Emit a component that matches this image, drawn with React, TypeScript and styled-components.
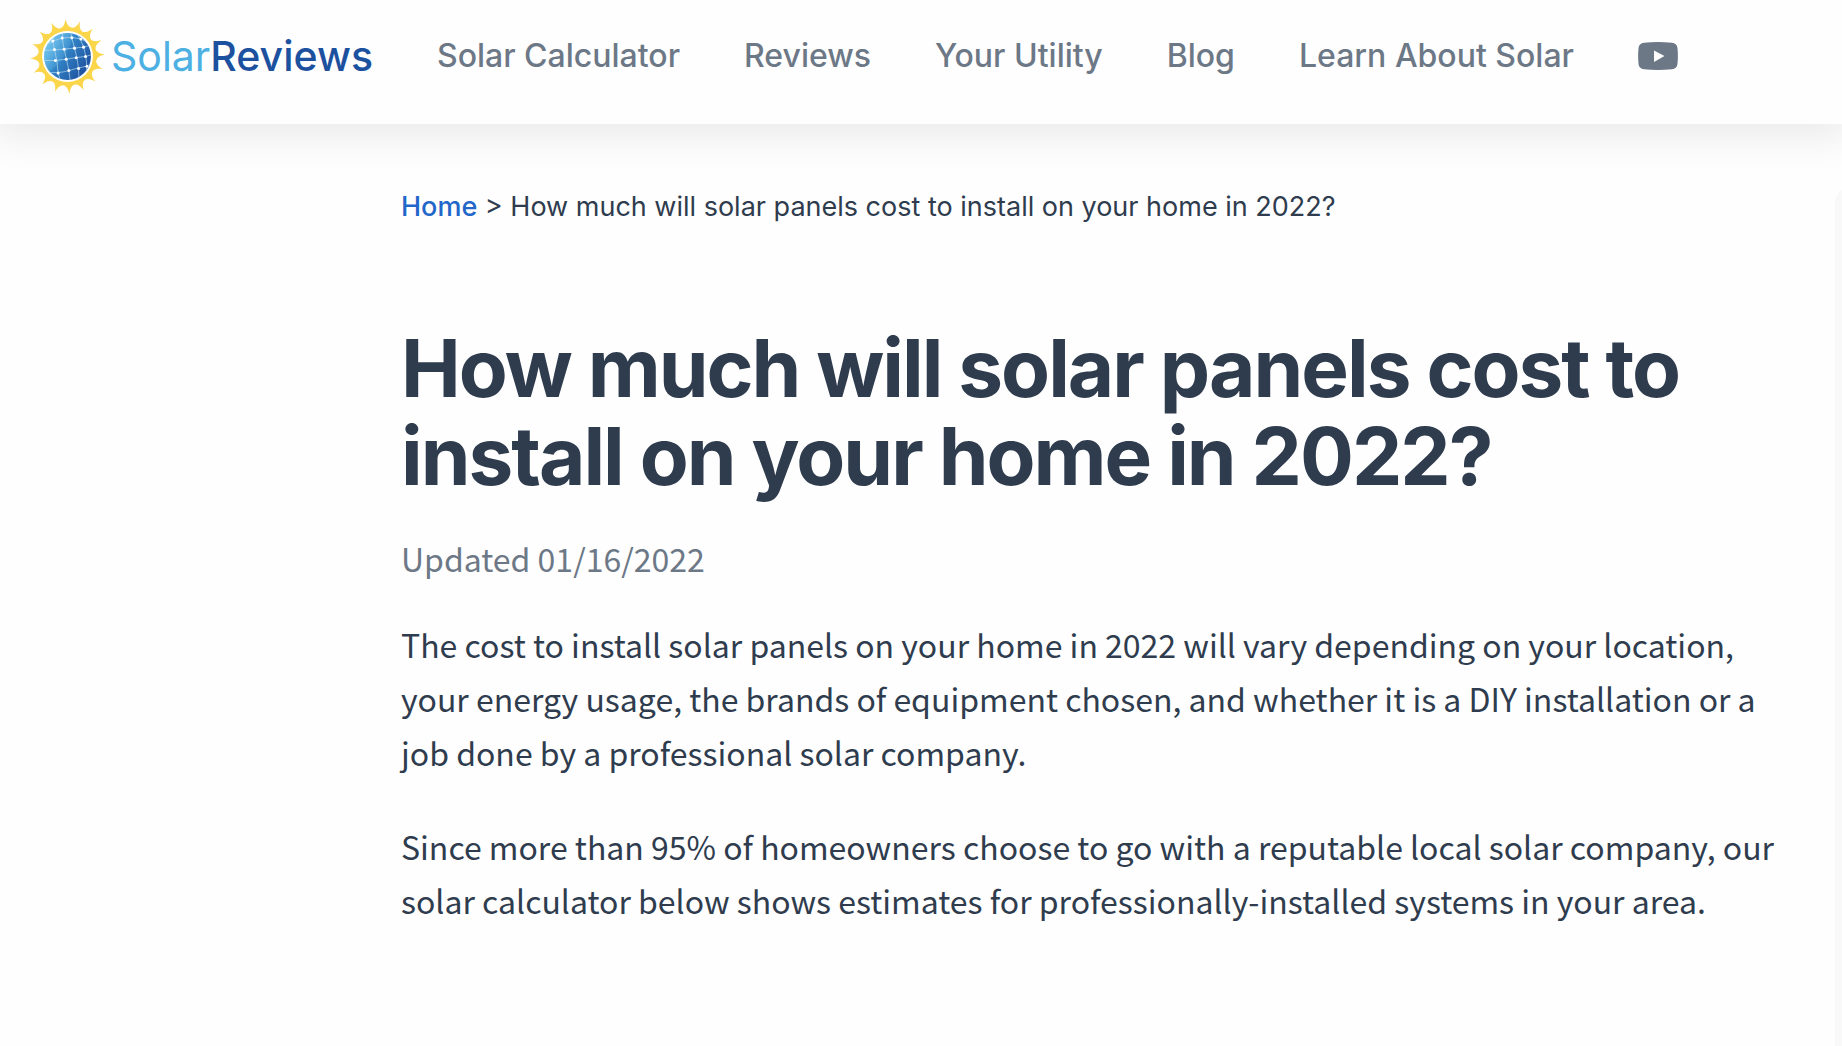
import React from "react";
import styled, { createGlobalStyle } from "styled-components";

const ui = `Inter, "Liberation Sans", sans-serif`;
const reading = `"Noto Sans CJK SC", "Noto Sans", sans-serif`;

const GlobalStyle = createGlobalStyle`
  *, *::before, *::after { box-sizing: border-box; }
  body { margin: 0; background: #fefefe; color: #2f3c4e; font-family: ${ui}; }
`;

const Page = styled.div`
  display: flex;
  flex-direction: column;
  min-height: 100vh;
  overflow-x: clip;
`;

const Header = styled.header`
  display: flex;
  align-items: center;
  gap: 64px;
  height: 124px;
  padding: 0 30px 12px;
  background: #fefefe;
  box-shadow: 0 0 40px 10px rgba(0, 0, 0, 0.09);
`;

const Brand = styled.a`
  display: flex;
  align-items: center;
  gap: 6px;
  color: #1c51a0;
  text-decoration: none;
`;

const BrandName = styled.span`
  font-size: 41px;
  font-weight: 500;
  line-height: 48px;
`;

const BrandLight = styled.span`
  color: #4db0e3;
  font-weight: 400;
`;

const Nav = styled.nav`
  display: flex;
  align-items: center;
  gap: 64px;
`;

const NavLink = styled.a`
  display: flex;
  color: #6d7887;
  font-size: 32px;
  font-weight: 500;
  line-height: 40px;
  white-space: nowrap;
  text-decoration: none;
`;

const Body = styled.div`
  display: grid;
  flex: 1;
  grid-template-columns: minmax(0, 1fr) 7px;
  gap: 48px;
  padding: 63px 0 0 401px;
`;

const Breadcrumb = styled.nav`
  font-size: 27px;
  line-height: 40px;
`;

const HomeLink = styled.a`
  color: #2266c9;
  font-weight: 500;
  text-decoration: none;
`;

const Title = styled.h1`
  margin: 97px 0 0;
  font-size: 80px;
  font-weight: 700;
  line-height: 88px;
  letter-spacing: -0.025em;
`;

const Updated = styled.p`
  margin: 31px 0 0;
  color: #6d7887;
  font-family: ${reading};
  font-size: 32px;
  line-height: 54px;
`;

const Paragraph = styled.p<{ $first?: boolean }>`
  margin: ${(p) => (p.$first ? 32 : 40)}px 0 0;
  font-family: ${reading};
  font-size: 32px;
  line-height: 54px;
`;

const Sidebar = styled.aside`
  width: 640px;
  border-radius: 16px 0 0 0;
  background: #f9f9f9;
`;

const tipCount = 16;
const polar = (radius: number, degrees: number) => {
  const a = (degrees * Math.PI) / 180;
  return `${(112 + radius * Math.sin(a)).toFixed(1)} ${(112 - radius * Math.cos(a)).toFixed(1)}`;
};
const step = 360 / tipCount;
const rays =
  `M${polar(112, -3)}` +
  Array.from({ length: tipCount }, (_, i) => {
    const a = -3 + i * step;
    return `C${polar(80, a + 4)} ${polar(80, a + step - 4)} ${polar(112, a + step)}`;
  }).join("") +
  "Z";

const nodes = [
  [68, 66], [96, 57], [125, 56], [152, 60],
  [73, 91], [102, 90], [133, 87], [160, 84],
  [76, 124], [108, 120], [138, 116], [166, 112],
  [84, 161], [116, 154], [145, 148], [170, 141],
];

const SunLogo = () => (
  <svg width="75" height="75" viewBox="0 0 224 224" aria-hidden="true">
    <defs>
      <linearGradient id="globe" x1="0.1" y1="0.2" x2="0.95" y2="0.75">
        <stop offset="0" stopColor="#6cc5ee" />
        <stop offset="0.35" stopColor="#3488c9" />
        <stop offset="1" stopColor="#1d4f9e" />
      </linearGradient>
      <linearGradient id="shine" x1="0" y1="0" x2="1" y2="0.7">
        <stop offset="0" stopColor="#8ad8f8" stopOpacity="0.9" />
        <stop offset="1" stopColor="#3a8fd0" stopOpacity="0.3" />
      </linearGradient>
      <clipPath id="disc">
        <circle cx="112" cy="112" r="70" />
      </clipPath>
    </defs>
    <path d={rays} fill="#fbd54a" />
    <circle cx="112" cy="112" r="76" fill="#fff" />
    <circle cx="112" cy="112" r="70" fill="url(#globe)" />
    <g clipPath="url(#disc)">
      <path d="M30 30H132C126 84 96 130 52 162H30Z" fill="url(#shine)" />
      <g fill="none" stroke="#b9dcf2" strokeWidth="2">
        <path d="M54 74Q68 64 96 57T152 60L164 66" />
        <path d="M40 94Q73 93 102 90T160 84L182 78" />
        <path d="M38 124Q76 126 108 120T166 112L186 106" />
        <path d="M46 158Q84 164 116 154T170 141L184 132" />
        <path d="M76 46Q64 58 73 91T84 161L90 182" />
        <path d="M99 36Q94 58 102 90T116 154L120 184" />
        <path d="M121 38Q125 60 133 87T145 148L146 178" />
        <path d="M140 44Q152 60 160 84T170 141L168 156" />
      </g>
      <g fill="#fff">
        {nodes.map(([x, y]) => (
          <circle key={`${x}-${y}`} cx={x} cy={y} r="4.5" />
        ))}
      </g>
    </g>
  </svg>
);

const YouTubeIcon = () => (
  <svg width="40" height="28" viewBox="0 0 40 28" aria-hidden="true">
    <path
      d="M6 .8Q20-.6 34 .8Q38.600 1.200 39.400 5.500Q40.400 14 39.400 22.500Q38.600 26.800 34 27.200Q20 28.600 6 27.200Q1.400 26.800.6 22.500Q-.4 14 .6 5.500Q1.400 1.200 6 .8Z"
      fill="#6d7887"
    />
    <path d="M16 8.500L26.500 14L16 20Z" fill="#fefefe" />
  </svg>
);

const links = ["Solar Calculator", "Reviews", "Your Utility", "Blog", "Learn About Solar"];

export default function App() {
  return (
    <Page>
      <GlobalStyle />
      <Header>
        <Brand href="#">
          <SunLogo />
          <BrandName>
            <BrandLight>Solar</BrandLight>Reviews
          </BrandName>
        </Brand>
        <Nav aria-label="Main">
          {links.map((label) => (
            <NavLink key={label} href="#">
              {label}
            </NavLink>
          ))}
          <NavLink href="#" aria-label="YouTube">
            <YouTubeIcon />
          </NavLink>
        </Nav>
      </Header>
      <Body>
        <main>
          <Breadcrumb aria-label="Breadcrumb">
            <HomeLink href="#">Home</HomeLink> &gt; How much will solar panels cost to install on your
            home in 2022?
          </Breadcrumb>
          <Title>How much will solar panels cost to install on your home in 2022?</Title>
          <Updated>Updated 01/16/2022</Updated>
          <Paragraph $first>
            The cost to install solar panels on your home in 2022 will vary depending on your location,
            your energy usage, the brands of equipment chosen, and whether it is a DIY installation or a
            job done by a professional solar company.
          </Paragraph>
          <Paragraph>
            Since more than 95% of homeowners choose to go with a reputable local solar company, our
            solar calculator below shows estimates for professionally-installed systems in your area.
          </Paragraph>
        </main>
        <Sidebar />
      </Body>
    </Page>
  );
}
